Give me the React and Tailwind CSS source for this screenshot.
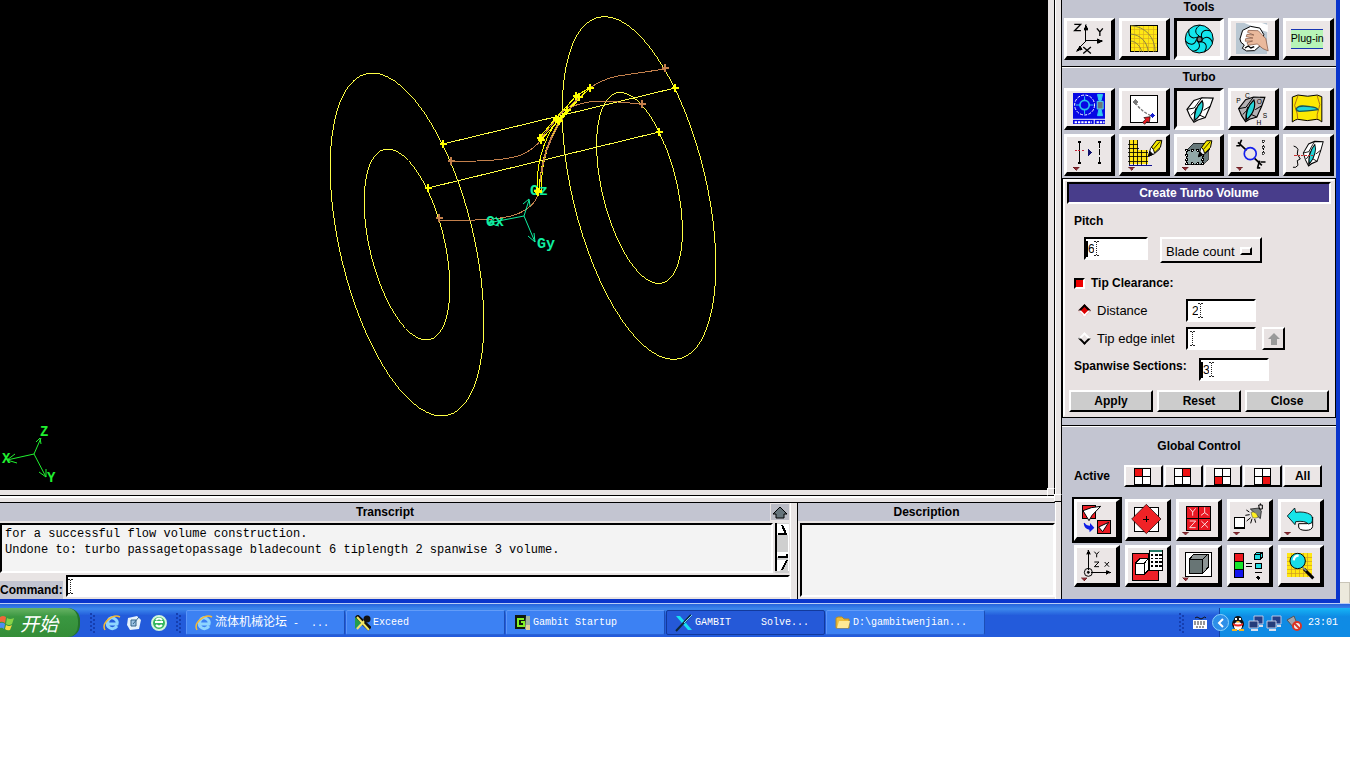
import React from "react";

const RAISED =
  "border-t-[3px] border-l-[3px] border-b-[4px] border-r-[4px] border-t-white border-l-white border-b-black border-r-black";
const PRESSED =
  "border-t-[3px] border-l-[3px] border-b-[4px] border-r-[4px] border-t-black border-l-black border-b-white border-r-white";
const THIN =
  "border-2 border-t-white border-l-white border-b-black border-r-black";
const SUNKEN =
  "border-2 border-t-black border-l-black border-b-white border-r-white";

function IconButton({ label, box, pressed, focused, children }) {
  return (
    <button
      aria-label={label}
      className={
        "flex h-[42px] min-w-0 items-center justify-center overflow-hidden bg-[#ebe6e6] " +
        (pressed ? PRESSED : RAISED) +
        (focused ? " outline-2 outline-black" : "")
      }
    >
      <svg viewBox={box} className="h-[35px] w-full" fill="none" stroke="#000" strokeWidth="3" shapeRendering="crispEdges">
        {children}
      </svg>
    </button>
  );
}

const Drop = ({ x, y }) => <path d={`M${x} ${y}h19l-9 10z`} fill="#8c2f38" stroke="#400" strokeWidth="1" />;

const Blade = ({ dx = 0, dy = 0, gray }) => (
  <g transform={`translate(${dx} ${dy})`} shapeRendering="auto">
    <path d="M408 327l21-27 24-8 34 1-9 25-15 34-22 7-12 7-12-18z" fill={gray ? "#b5b2b5" : "#fff"} strokeWidth="3.5" />
    <path d="M408 327l22-4 16-22 7-9M420 345l12-12 4-12M429 363l3-28M463 352l-18-8M478 318l-20 12" strokeWidth="3" />
    <path d="M432 360c-4-16 3-42 22-59 6 14 1 40-22 59z" fill="#25d5d8" strokeWidth="3.5" />
  </g>
);

const Pencil = ({ x, y }) => (
  <g transform={`translate(${x} ${y})`} shapeRendering="auto">
    <path d="M0 48l6-24 12-14 16 16-16 14z" fill="#fff" strokeWidth="3" />
    <path d="M9 20L24 0h16l-4 20-18 18-3-10z" fill="#f5e800" strokeWidth="3" />
    <path d="M15 26L35 3" strokeWidth="2.5" />
    <path d="M0 48l4-15 9 9z" fill="#000" />
  </g>
);

function ToolsRow() {
  return (
    <div className="grid grid-cols-5 gap-1 px-0.5">
      <IconButton label="Coordinate system" box="51 64 132 105">
        <path d="M108 127V88M108 124h38M108 124l-24 24" />
        <path d="M102 92l6-19 7 19zM142 117l17 7-17 8zM90 138l-12 18 19-6z" fill="#000" strokeWidth="1" />
        <path d="M73 74h19l-18 19h19M141 86l9 11 9-11M150 97v12M100 142l23 20M123 142l-23 20" strokeWidth="4" shapeRendering="auto" />
      </IconButton>
      <IconButton label="Grid size function" box="216 64 132 105">
        <path d="M241 76h82v81h-82z" fill="#ffe715" />
        <path d="M254 78v78M268 78v78M282 78v78M296 78v78M310 78v78M242 89h80M242 103h80M242 117h80M242 131h80M242 144h80" stroke="#d6aa20" strokeWidth="2" />
        <path d="M242 78c45 2 73 35 74 78M242 103c30 2 50 24 53 53M242 124c18 2 30 17 33 32" stroke="#8c8440" shapeRendering="auto" />
      </IconButton>
      <IconButton label="Turbo" box="378 61 132 105" pressed>
        <g shapeRendering="auto">
          <circle cx="445" cy="115" r="42" fill="#13e5ec" />
          {[0, 51.4, 102.8, 154.2, 205.6, 257, 308.4].map((a) => (
            <path key={a} d="M445 106c-15-8-14-23 3-33" transform={`rotate(${a} 445 115)`} />
          ))}
          <circle cx="446" cy="116" r="8" fill="#777" strokeWidth="4" />
        </g>
      </IconButton>
      <IconButton label="Clean geometry" box="546 64 132 105">
        <path d="M561 69h95v95h-95z" fill="#b9c7d2" stroke="none" />
        <g shapeRendering="auto">
          <path d="M585 69h52l20 7v22l-22-8z" fill="#fff" stroke="none" />
          <path d="M573 118l8-26 24-12 28 5 12 20-12 34-16 14-24 1-13-8 6-10-10-8z" fill="#fff" strokeWidth="3" />
          <path d="M598 92l30 1 23 24 7 37-16-7-17-14-27 4-4-8 17-5-22 1 1-8 22-2-20-4 2-7 21 2-19-8z" fill="#eab99c" stroke="#7a4a35" strokeWidth="2" />
          <path d="M588 145l10-6 8 6 10-4" strokeWidth="4" />
        </g>
      </IconButton>
      <IconButton label="Plug-in" box="711 64 132 105">
        <path d="M727 88h96v58h-96z" fill="#b7f5b7" stroke="none" />
        <path d="M727 88h96M727 146h96" stroke="#1734b2" />
        <text x="775" y="128" textAnchor="middle" fontSize="32" fontFamily="Liberation Sans, sans-serif" fill="#000" stroke="none">Plug-in</text>
      </IconButton>
    </div>
  );
}

function TurboRows() {
  return (
    <div className="grid grid-cols-5 gap-1 px-0.5">
      <IconButton label="Turbo profile" box="51 274 132 105">
        <path d="M69 280h98v94H69z" fill="#0707e4" stroke="none" />
        <g shapeRendering="auto">
          <circle cx="104" cy="316" r="30" stroke="#fff" strokeDasharray="9 4" />
          <circle cx="104" cy="316" r="14" stroke="#28c4ed" strokeWidth="5" />
          <path d="M104 290v12M104 330v13M78 316h12M118 316h13M143 284h15l-4 18h-7zM143 348h15l-4-18h-7z" stroke="#31c9ef" fill="#31c9ef" />
          <path d="M142 305h18v23h-18z" fill="#6a7680" stroke="#52d9ee" />
          <path d="M69 359h98M133 359v15" stroke="#fff" />
          <path d="M74 368h52M140 368h24" stroke="#fff" strokeWidth="6" strokeDasharray="7 3" />
        </g>
      </IconButton>
      <IconButton label="Turbo edge" box="216 274 132 105">
        <path d="M241 287h82v81h-82z" fill="#fff" />
        <path d="M257 309q14 24 44 38" stroke="#777" strokeWidth="4" strokeDasharray="9 4" shapeRendering="auto" />
        <path d="M249 307l8-8 8 8-8 8z" fill="#777" stroke="none" />
        <path d="M300 347l8-8 8 8-8 8z" fill="#1821d0" stroke="none" />
        <path d="M301 351l-3 19-5-5-9 9-6-6 9-9-5-5z" fill="#e71920" strokeWidth="2" shapeRendering="auto" />
      </IconButton>
      <IconButton label="Turbo volume" box="378 271 132 105" pressed><Blade dy={-1} /></IconButton>
      <IconButton label="Turbo zones" box="546 274 132 105">
        <Blade dx={161} gray />
        <g fontFamily="Liberation Sans, sans-serif" fontSize="20" fill="#000" stroke="none">
          <text x="588" y="294">C</text><text x="562" y="310">P</text><text x="624" y="313">O</text><text x="642" y="354">S</text><text x="623" y="375">H</text>
        </g>
      </IconButton>
      <IconButton label="Turbo view" box="711 274 132 105">
        <path d="M730 292l17-6q30 7 58 0l14 5v76q-9-8-15-8-29 8-58 0-7 1-16 8z" fill="#fce803" shapeRendering="auto" />
        <path d="M747 288l-10 29 8 26 1 15M805 288l8 27-8 29v15" stroke="#b07112" shapeRendering="auto" />
        <path d="M742 327c7-12 25-9 42-6q21 2 23 9-36 5-55 5-10-1-10-8z" fill="#20d4d8" stroke="#1c5454" strokeWidth="4" shapeRendering="auto" />
      </IconButton>
      <IconButton label="Link edges" box="51 411 132 105">
        <path d="M88 426v65" /><path d="M148 426v65" strokeDasharray="18 4" />
        <path d="M84 426h8M84 490h8M144 426h8M144 490h8" strokeWidth="6" />
        <path d="M75 452h30" stroke="#c32236" strokeDasharray="6 4" />
        <path d="M114 446l14 11-14 12z" fill="#10106c" stroke="none" /><Drop x={69} y={502} />
      </IconButton>
      <IconButton label="Mesh edges" box="216 411 132 105">
        <path d="M237 420h26v31h30v42h-56z" fill="#ffe414" stroke="none" />
        <path d="M240 419v78M250 419v78M262 419v78M274 451v46M290 451v46M234 432h31M234 445h32M234 457h59M234 471h59M234 485h59" strokeWidth="2.5" />
        <path d="M236 498h69" stroke="#101091" /><Pencil x={296} y={421} /><Drop x={235} y={502} />
      </IconButton>
      <IconButton label="Mesh faces" box="381 411 132 105">
        <path d="M411 450l20-20h44v50l-17 14h-47z" fill="#67787a" strokeWidth="2" />
        <path d="M411 450h47v43h-47z" fill="#92a8a8" strokeDasharray="8 5" />
        {[411, 427, 443, 458].map((x) => <path key={x} d={`M${x - 3} 447h6v6h-6zM${x - 3} 489h6v6h-6z`} fill="#fff" />)}
        {[463, 477].map((y) => <path key={y} d={`M408 ${y}h6v6h-6zM455 ${y}h6v6h-6z`} fill="#fff" />)}
        <Pencil x={446} y={422} /><Drop x={396} y={502} />
      </IconButton>
      <IconButton label="Boundary zones" box="546 411 132 105">
        <path d="M567 427l26 24M617 475l22 21M562 437h12M578 419l-6 14M632 482l-6 22M624 504h10M635 486h15" strokeWidth="5" shapeRendering="auto" />
        <circle cx="604" cy="461" r="18" stroke="#1420ed" strokeWidth="5" shapeRendering="auto" />
        <path d="M643 424v38" strokeDasharray="6 4" /><path d="M640 421h6v6h-6zM640 438h6v6h-6zM640 457h6v6h-6z" fill="#fff" strokeWidth="2" /><Drop x={562} y={502} />
      </IconButton>
      <IconButton label="Display view" box="711 411 132 105">
        <path d="M734 438q10 2 13 10l-2 14 9 15-9 5 2 14-7 6h-8" strokeWidth="3" shapeRendering="auto" />
        <g transform="translate(763 424) scale(.76 1) translate(-408 -292)"><Blade /></g>
        <path d="M736 466h55" stroke="#c82d2d" strokeDasharray="7 3" />
      </IconButton>
    </div>
  );
}

function GlobalGrid() {
  return (
    <div className="mt-3 grid grid-cols-5 gap-x-[5px] gap-y-1 pr-3 pl-3">
      <IconButton label="Fit to window" box="81 247 117 105" focused>
        <path d="M98 256h39v39H98z" fill="#ed1d24" />
        <path d="M99 273l25-9 28-4-26 27-9 16z" fill="#fff" shapeRendering="auto" />
        <path d="M142 302h39v38h-39z" fill="#ed1d24" /><path d="M146 322l30-14-18 28z" fill="#fff" shapeRendering="auto" />
        <path d="M104 309q4 9 16 9v-8l13 14-14 14-1-8q-15-2-17-19z" fill="#101ee6" stroke="none" shapeRendering="auto" />
      </IconButton>
      <IconButton label="Pivot" box="237 247 117 105">
        <path d="M256 263h72v72h-72z" fill="#fff" /><path d="M292 254l44 44-44 44-44-44z" fill="#f02226" strokeWidth="2" shapeRendering="auto" />
        <path d="M283 298h18M292 289v18" />
      </IconButton>
      <IconButton label="Orient model" box="390 247 117 105">
        <path d="M413 259h72v73h-72z" fill="#e91823" /><path d="M449 259v73M413 295h72" />
        <path d="M422 266l9 11 9-11M431 277v11M467 263v16M467 279l-11 8M467 279l11 8M422 304h18l-18 20h18M457 304l20 20M477 304l-20 20" stroke="#fff" strokeWidth="2.5" shapeRendering="auto" /><Drop x={400} y={337} />
      </IconButton>
      <IconButton label="Light" box="540 247 117 105">
        <path d="M553 293h31v32h-31z" fill="#fff" strokeWidth="4" />
        <g shapeRendering="auto">
          <path d="M601 268l27-3 6 10-3 22z" fill="#7b8181" strokeWidth="2" /><path d="M603 278q14-6 22 15-12 5-18 0z" fill="#fff020" stroke="#555" strokeWidth="2" />
          <path d="M626 256h11v12h-9zM631 256v-5" strokeWidth="3" />
          <path d="M589 271l9 6M586 287l13-2M590 304l12-10M602 311l4-14M617 309l-3-11" />
        </g>
        <Drop x={550} y={337} />
      </IconButton>
      <IconButton label="Undo" box="693 247 117 105">
        <g shapeRendering="auto"><path d="M746 312h25q16-1 17-20v28q-2 12-20 12-21 0-22-10z" fill="#fff" /><path d="M712 289l22-24 3 13q27-4 45 7 9 9 3 25l-10 3q-9-11-38-7l-2 9z" fill="#16e4e9" strokeWidth="2.5" /></g><Drop x={703} y={337} />
      </IconButton>
      <IconButton label="Orientation axes" box="81 385 117 105">
        <path d="M115 451v-47M122 458h47" /><path d="M109 404l6-14 7 14zM168 452l15 6-15 7z" fill="#000" strokeWidth="1" />
        <circle cx="115" cy="458" r="12" shapeRendering="auto" /><circle cx="115" cy="458" r="3" fill="#000" shapeRendering="auto" />
        <path d="M133 396l7 8 7-8M140 404v9M133 427h14l-14 14h14M164 427l13 14M177 427l-13 14" strokeWidth="3" shapeRendering="auto" /><Drop x={93} y={474} />
      </IconButton>
      <IconButton label="Annotate" box="237 385 117 105">
        <path d="M250 400h48v41h31v40h-79z" fill="#ed2028" /><path d="M260 430l15-15h24v36l-14 14h-25z" fill="#fff" /><path d="M260 430h27v35M287 430l12-15" />
        <path d="M301 391h40v60h-40z" fill="#fff" /><path d="M303 395h36" stroke="#237a66" strokeWidth="6" /><path d="M307 405h8M318 405h8M330 405h8M307 416h8M318 416h8M330 416h8M307 427h8M318 427h8M330 427h8M307 438h8M318 438h8M330 438h8" strokeWidth="5" strokeDasharray="5 2" />
      </IconButton>
      <IconButton label="Shading" box="390 385 117 105">
        <path d="M409 397h78v72h-78z" fill="#fff" /><path d="M420 420l15-17h42v41l-16 17h-41z" fill="#8d9595" /><path d="M420 420h41v41h-41z" fill="#687575" /><path d="M461 420l16-17" /><Drop x={400} y={474} />
      </IconButton>
      <IconButton label="Color mode" box="540 385 117 105">
        <path d="M554 400h27v25h-27z" fill="#ed171d" /><path d="M554 425h27v24h-27z" fill="#17e52b" /><path d="M554 449h27v23h-27z" fill="#1214ed" /><path d="M588 431h17M588 440h17" strokeWidth="4" />
        <path d="M613 404l8-7h16v15l-7 8h-17z" fill="#24dce2" /><path d="M613 404h17v15M630 404l7-7" /><path d="M616 431h18v16h-18z" fill="#24dce2" /><path d="M616 459h19" /><path d="M618 475l7-7 8 7-8 7z" fill="#000" stroke="none" />
      </IconButton>
      <IconButton label="Examine mesh" box="693 385 117 105">
        <path d="M712 400h73v72h-73z" fill="#ffe711" stroke="none" /><path d="M712 412h73M712 424h73M712 436h73M712 448h73M712 460h73M724 400v72M736 400v72M748 400v72M760 400v72M772 400v72" stroke="#cc9827" strokeWidth="2" />
        <g shapeRendering="auto"><path d="M762 448l28 28" strokeWidth="9" /><path d="M755 440l14 14" stroke="#808b91" strokeWidth="5" /><circle cx="743" cy="424" r="23" fill="#19dde8" /><path d="M731 422q2-15 15-14" stroke="#fff" strokeWidth="7" /></g>
      </IconButton>
    </div>
  );
}

const Plus = ({ x, y, c = "#ffff00" }) => <path d={`M${x - 3} ${y}h7M${x} ${y - 4}v8`} stroke={c} strokeWidth="2" />;

function Viewport() {
  return (
    <svg viewBox="0 0 1048 490" className="block h-auto w-full bg-black" fill="none" strokeWidth="1" shapeRendering="crispEdges" role="img" aria-label="Turbo geometry">
      <g stroke="#ffff45">
        <ellipse cx="407" cy="244.500" rx="67" ry="175.500" transform="rotate(-13.4 407 244.5)" />
        <ellipse cx="407" cy="244.500" rx="37.400" ry="97.800" transform="rotate(-13.4 407 244.5)" />
        <ellipse cx="639" cy="188" rx="67" ry="175.500" transform="rotate(-13.4 639 188)" />
        <ellipse cx="639.500" cy="188" rx="37.400" ry="97.800" transform="rotate(-13.4 639.5 188)" />
        <path d="M443 144L675 88M428 188L659 132" />
      </g>
      <g stroke="#ffff00">
        <path d="M539 138L556 118L577 95L590 88M540 141L558 121L577 100L589 89M537 192Q536 150 557 121L567 110M539 192Q541 148 561 120L579 99M541 192Q541 150 562 118L574 103" />
      </g>
      <g stroke="#c4804c">
        <path d="M451 161C480 162 516 160 527 152C538 146 541 139 541 139" />
        <path d="M439 220H475C510 219 520 214 528 208Q537 202 538 192" />
        <path d="M590 88Q600 80 618 76L665 69M567 111Q576 101 606 101L642 104" />
        <path d="M541 138L564 110M540 182Q543 148 560 120M542 172Q545 146 563 118M561 114L582 95" />
      </g>
      <g stroke="#10efa0" shapeRendering="auto">
        <path d="M524 216L488 223M524 216L529 200M524 216L535 242M497 217l-9 6 11 3M523 204l6-5 1 7M528 236l7 6-1-9" />
        <g fill="#10efa0" stroke="none" fontFamily="Liberation Mono, monospace" fontSize="15" fontWeight="bold">
          <text x="486" y="226">Gx</text><text x="530" y="195">Gz</text><text x="537" y="248">Gy</text>
        </g>
      </g>
      <g stroke="#20f030" shapeRendering="auto">
        <path d="M34 454L7 460M34 454L41 438M34 454L46 477M15 454l-8 6 10 3M36 442l4-4 1 6M39 472l7 5v-8" />
        <g fill="#20f030" stroke="none" fontFamily="Liberation Mono, monospace" fontSize="14" fontWeight="bold">
          <text x="2" y="463">X</text><text x="40" y="436">Z</text><text x="47" y="482">Y</text>
        </g>
      </g>
      {[[443, 144], [428, 188], [675, 88], [659, 132], [590, 88], [576, 96], [579, 97], [567, 110], [556, 119], [559, 121], [558, 120], [540, 138], [541, 140], [538, 192], [537, 191]].map(([x, y]) => <Plus key={`${x}-${y}`} x={x} y={y} />)}
      {[[451, 161], [439, 218], [665, 68], [642, 104]].map(([x, y]) => <Plus key={`${x}-${y}`} x={x} y={y} c="#c4804c" />)}
    </svg>
  );
}

const IBeam = () => (
  <svg viewBox="0 0 5 15" className="h-[15px] w-[5px]" stroke="#222" fill="none" shapeRendering="crispEdges" aria-hidden="true">
    <path d="M0 .5h2M3 .5h2M0 14.500h2M3 14.500h2" /><path d="M2.500 1v13" strokeDasharray="1 1" />
  </svg>
);

function Field({ id, value, width, bar }) {
  return (
    <div className={`flex h-[23px] items-center bg-white ${SUNKEN} ${width}`}>
      <span className={bar ? "h-4 w-0.5 bg-black" : value ? "w-1" : "w-0.5"} />
      <input id={id} aria-label={id} defaultValue={value} className={"bg-transparent p-0 text-[12px] leading-4 outline-none " + (value ? "w-[6px]" : "w-0")} />
      <IBeam />
    </div>
  );
}

const ActionButton = ({ children }) => (
  <button className={`h-[22px] bg-[#cccccc] text-[12px] leading-4 font-bold ${THIN}`}>{children}</button>
);

function TurboForm() {
  return (
    <form className="border border-black bg-[#e8e2e2]" onSubmit={(e) => e.preventDefault()}>
      <div className="border-2 border-t-white border-l-white border-r-transparent border-b-transparent pt-px pr-0.5 pb-[3px] pl-0.5">
        <h2 className={`h-[22px] bg-[#483d8b] text-center text-[12px] leading-[18px] font-bold text-white ${SUNKEN}`}>Create Turbo Volume</h2>
        <div className="px-[7px] pt-[9px]">
          <label htmlFor="Pitch" className="block text-[12px] leading-4 font-bold">Pitch</label>
          <div className="mt-2 flex gap-3 pl-2.5">
            <Field id="Pitch" value="6" width="w-16" bar />
            <div className={`relative h-[26px] w-[102px] bg-[#ebe6e6] ${THIN}`}>
              <select aria-label="Pitch type" className="h-full w-full appearance-none bg-transparent pl-1 text-[13px] leading-4 outline-none"><option>Blade count</option></select>
              <span className={`pointer-events-none absolute top-2 right-2 h-2 w-3 bg-[#ebe6e6] ${THIN}`} />
            </div>
          </div>
          <label className="mt-3 flex items-center gap-1.5 text-[12px] leading-4 font-bold">
            <input type="checkbox" defaultChecked className={`size-[11px] appearance-none bg-[#ee0000] ${SUNKEN}`} />Tip Clearance:
          </label>
          <div className="mt-2 flex items-center">
            <label className="flex w-28 items-center gap-2 pl-1.5 text-[13px] leading-4">
              <input type="radio" name="tip" defaultChecked className="size-[9px] rotate-45 appearance-none border-2 border-t-black border-l-black border-r-white border-b-white bg-[#dd0000]" /><span>Distance</span>
            </label>
            <Field id="Distance" value="2" width="w-[70px]" />
          </div>
          <div className="mt-[5px] flex items-center">
            <label className="flex w-28 items-center gap-2 pl-1.5 text-[13px] leading-4 whitespace-nowrap">
              <input type="radio" name="tip" className="size-[9px] rotate-45 appearance-none border-2 border-t-white border-l-white border-r-black border-b-black" /><span>Tip edge inlet</span>
            </label>
            <Field id="Tip edge inlet" value="" width="w-[70px]" />
            <button aria-label="Pick edge" className={`ml-1.5 flex h-[23px] w-[23px] items-center justify-center ${THIN}`}>
              <svg viewBox="0 0 12 12" className="size-3" fill="#999"><path d="M6 0l6 6H9v6H3V6H0z" /></svg>
            </button>
          </div>
          <div className="mt-2 flex gap-2">
            <label htmlFor="Spanwise Sections" className="w-[117px] text-[12px] leading-4 font-bold whitespace-nowrap">Spanwise Sections:</label>
            <Field id="Spanwise Sections" value="3" width="w-[70px]" bar />
          </div>
        </div>
        <div className="mt-[9px] grid grid-cols-3 gap-1 px-0.5">
          <ActionButton>Apply</ActionButton><ActionButton>Reset</ActionButton><ActionButton>Close</ActionButton>
        </div>
      </div>
    </form>
  );
}

function Quadrant({ cx, cy, label }) {
  return (
    <button aria-label={label} className={`flex h-[22px] items-center justify-center bg-[#ebe6e6] ${THIN}`}>
      <svg viewBox="0 0 18 17" className="h-[17px] w-[18px]" shapeRendering="crispEdges">
        <path d="M1 1h16v15H1z" fill="#fff" /><rect x={cx} y={cy} width="8" height="8" fill="#ee1414" />
        <path d="M.5.5h16v16H.5zM8.500 0v17M0 8.500h17" fill="none" stroke="#000" />
      </svg>
    </button>
  );
}

function ControlPanel() {
  return (
    <aside className="w-[275px] shrink-0 border-l border-black bg-[#c3c5d1]">
      <h2 className="h-[18px] text-center text-[12px] leading-[14px] font-bold">Tools</h2>
      <ToolsRow />
      <h2 className="mt-[6px] h-[22px] border-t border-black text-center text-[12px] leading-5 font-bold shadow-[inset_0_1px_0_#fff]">Turbo</h2>
      <TurboRows />
      <div className="mt-0.5"><TurboForm /></div>
      <section className="mt-[7px] border-t border-black pb-3 shadow-[inset_0_1px_0_#fff]">
        <h2 className="pt-3 text-center text-[12px] leading-4 font-bold">Global Control</h2>
        <div className="mt-[11px] flex items-center pr-3.5 pl-3">
          <span className="w-[50px] text-[12px] leading-4 font-bold">Active</span>
          <div className="grid flex-1 grid-cols-5 gap-px">
            <Quadrant label="Upper left" cx={1} cy={1} /><Quadrant label="Upper right" cx={9} cy={1} /><Quadrant label="Lower left" cx={1} cy={9} /><Quadrant label="Lower right" cx={9} cy={9} />
            <button className={`bg-[#ebe6e6] text-[12px] leading-4 font-bold ${THIN}`}>All</button>
          </div>
        </div>
        <GlobalGrid />
      </section>
    </aside>
  );
}

function ScrollStrip() {
  return (
    <svg viewBox="0 0 15 50" className="h-[50px] w-[15px]" shapeRendering="crispEdges" aria-hidden="true">
      <path d="M0 0h14v50H0z" fill="#cfcfcf" /><path d="M0 0h2v48H0z" />
      <path d="M2 1h11v11H2zM2 29h11v5H2zM2 37h9l-6 11H2z" fill="#fff" /><path d="M7 2l4 9H3M12 31v3H3M12 37L7 47" fill="none" stroke="#000" strokeWidth="2" /><path d="M13 1v47" stroke="#fff" />
    </svg>
  );
}

function Console() {
  return (
    <div className="flex bg-[#e8e4e4]">
      <section className="min-w-0 flex-1">
        <div className="flex h-[18px] items-center bg-[#c3c5d1]">
          <h2 className="flex-1 text-center text-[12px] leading-4 font-bold">Transcript</h2>
          <button aria-label="Expand transcript" className="flex h-full w-5 items-center justify-center border border-[#e8e4e4] bg-[#bbbcc5]">
            <svg viewBox="0 0 16 13" className="h-[13px] w-4"><path d="M8 1l7 7h-3v4H4V8H1z" fill="#66747a" stroke="#000" /></svg>
          </button>
        </div>
        <div className="mt-0.5 flex h-[50px] gap-0.5">
          <div className={`flex-1 bg-[#f3f3f3] pt-px pl-[3px] font-[Liberation_Mono,monospace] text-[12px] leading-4 whitespace-nowrap ${SUNKEN}`}>
            <p>for a successful flow volume construction.</p>
            <p>Undone to: turbo passagetopassage bladecount 6 tiplength 2 spanwise 3 volume.</p>
          </div>
          <ScrollStrip />
        </div>
        <div className="flex items-end gap-[3px] pt-0.5">
          <label htmlFor="command" className="bg-[#c3c5d1] text-[12px] leading-[18px] font-bold">Command:</label>
          <div className={`mb-0.5 flex h-[22px] flex-1 items-center bg-white ${SUNKEN}`}>
            <IBeam /><input id="command" className="min-w-0 flex-1 bg-transparent font-[Liberation_Mono,monospace] text-[12px] outline-none" />
          </div>
        </div>
      </section>
      <div className="w-2 border-r border-l border-l-white border-r-black" />
      <section className="flex w-[257px] flex-col">
        <h2 className="bg-[#c3c5d1] text-center text-[12px] leading-[18px] font-bold">Description</h2>
        <div className={`mt-0.5 mb-0.5 ml-0.5 flex-1 bg-[#f3f3f3] ${SUNKEN}`} />
      </section>
    </div>
  );
}

const IE = () => (
  <svg viewBox="0 0 18 18" className="size-[18px] shrink-0" fill="none">
    <path d="M14 12Q11 16 7 14T5 7t7-2q3 2 2 5H5" stroke="#8ed5ff" strokeWidth="3" /><path d="M2 16C-2 9 10-1 17 3" stroke="#f4b936" strokeWidth="1.500" />
  </svg>
);
const ExceedIcon = () => (
  <svg viewBox="0 0 16 16" className="size-4 shrink-0"><path d="M1 1l14 13" stroke="#111" strokeWidth="5" /><path d="M0 2l6 6-6 6z" fill="#229e4b" /><path d="M2 2l12 13M2 14L12 3" stroke="#f2e766" strokeWidth="2" /><circle cx="12" cy="4" r="3.500" fill="#111" /></svg>
);
const GambitIcon = () => (
  <svg viewBox="0 0 16 16" className="size-4 shrink-0"><path d="M0 0h11v14H0z" fill="#101910" /><path d="M9 4H3v7h6V7H6" fill="none" stroke="#83f225" strokeWidth="2" /><path d="M11 1h4v13h-5z" fill="#9fb3a0" /><path d="M11 10h4v5h-4z" fill="#e1cf9c" /></svg>
);
const XIcon = () => (
  <svg viewBox="0 0 18 18" className="size-[18px] shrink-0"><path d="M1 2h4l12 14h-4z" fill="#18e2f2" /><path d="M16 1L1 17" stroke="#0c273c" strokeWidth="2" /><path d="M17 1L9 9" stroke="#7ddce9" /></svg>
);
const FolderIcon = () => (
  <svg viewBox="0 0 16 14" className="h-3.5 w-4 shrink-0"><path d="M1 12V2l2-1h4l2 2h5v9z" fill="#eebd3a" stroke="#b78b22" /><path d="M2 12l2-7h11l-2 7z" fill="#ffe995" /></svg>
);

const Grip = () => (
  <svg viewBox="0 0 6 22" className="h-[22px] w-1.5 shrink-0" aria-hidden="true">
    {[1, 5, 9, 13, 17].map((y) => <path key={y} d={`M0 ${y}h2v2H0zM3 ${y + 2}h2v2H3z`} fill="#153eaf" />)}
  </svg>
);

function Task({ icon, active, children }) {
  return (
    <button className={"flex h-[25px] w-[159px] items-center gap-0.5 overflow-hidden rounded-[2px] border pl-2 font-[Liberation_Mono,Noto_Sans_CJK_SC,monospace] text-[10px] whitespace-pre text-white " + (active ? "border-[#123a9c] bg-[#2559d8]" : "border-t-[#639cf8] border-l-[#5a95f8] border-r-[#1d4eb5] border-b-[#2a63d5] bg-[#3c81f3]")}>
      {icon}<span>{children}</span>
    </button>
  );
}

const Monitor = () => (
  <svg viewBox="0 0 16 16" className="size-4"><path d="M6 1h9v8H6z" fill="#243f87" stroke="#b7c6e6" /><path d="M1 6h9v7H1z" fill="#253d7b" stroke="#c1cae3" /><path d="M3 15h7M11 11h4" stroke="#d9dfed" strokeWidth="2" /></svg>
);

function Taskbar() {
  return (
    <footer className="flex h-[34px] items-end border-t border-[#b9cdf6] bg-linear-to-b from-[#2663dc] via-[#3d87ec] via-15% to-[#235bdb] to-35%">
      <button className="flex h-[29px] w-20 items-center gap-1.5 rounded-r-xl border-r-2 border-[#23722c] bg-linear-to-b from-[#67b365] via-[#3a9741] via-30% to-[#348d37] text-[19px] leading-6 text-white italic">
        <svg viewBox="0 0 14 16" className="h-4 w-3.5 shrink-0"><path d="M0 2q3-2 6 0l-1 6q-3-2-5-1z" fill="#f1673a" /><path d="M7 3q3 2 7 0l-2 6q-3 2-6 0z" fill="#88d348" /><path d="M0 8q3-1 5 1l-1 5q-2-2-4-1z" fill="#4e8df1" /><path d="M6 10q3 2 6 0l-2 5q-3 1-5-1z" fill="#f9d943" /></svg>
        <span className="font-['Noto_Sans_CJK_SC',sans-serif]">开始</span>
      </button>
      <div className="flex h-[29px] w-[106px] items-center gap-[5px] pl-2.5">
        <Grip /><span className="ml-0.5"><IE /></span>
        <svg viewBox="0 0 16 16" className="size-4"><path d="M2 3l9-2 4 4-2 9-9 1-3-5z" fill="#e5f2fb" /><path d="M5 5h5v6H5zM7 9l6-7" fill="#9dc4e5" stroke="#346587" /></svg>
        <svg viewBox="0 0 16 16" className="ml-1 size-4"><circle cx="8" cy="8" r="7" fill="#33b75e" stroke="#d2f6db" strokeWidth="2" /><path d="M4 7h8M5 10q3 3 6 0M5 5q3-3 6 0" stroke="#fff" strokeWidth="2" fill="none" /></svg>
        <span className="ml-1"><Grip /></span>
      </div>
      <nav className="flex h-[27px] min-w-0 flex-1 items-start gap-px">
        <Task icon={<IE />}><span className="text-[12px]">流体机械论坛</span> -  ...</Task>
        <Task icon={<ExceedIcon />}>Exceed</Task>
        <Task icon={<GambitIcon />}>Gambit Startup</Task>
        <Task icon={<XIcon />} active>GAMBIT     Solve...</Task>
        <Task icon={<FolderIcon />}>D:\gambitwenjian...</Task>
      </nav>
      <div className="flex h-[29px] items-center gap-2 pr-3">
        <Grip />
        <svg viewBox="0 0 14 13" className="h-[13px] w-3.5"><path d="M0 4h14v9H0z" fill="#fff" /><path d="M1 6h12M1 8h12M3 11h8" stroke="#333" strokeDasharray="2 1" /><path d="M2 2q2-2 4 0t4 0 3 0" stroke="#111" fill="none" /></svg>
      </div>
      <div className="flex h-[29px] w-[131px] items-center border-l border-[#1042a8] bg-linear-to-b from-[#18b5f5] to-[#0f8be4] to-30%">
        <button aria-label="Show hidden icons" className="-ml-2 flex size-[17px] items-center justify-center rounded-full border border-[#8cd4fc] bg-[#2d8fe8]">
          <svg viewBox="0 0 8 10" className="h-2.5 w-2" fill="none" stroke="#fff" strokeWidth="2"><path d="M6 1L2 5l4 4" /></svg>
        </button>
        <div className="ml-px flex gap-0.5">
          <svg viewBox="0 0 16 16" className="size-4"><ellipse cx="8" cy="9" rx="6" ry="6" fill="#111" /><circle cx="8" cy="5" r="4" fill="#111" /><ellipse cx="8" cy="11" rx="4" ry="4" fill="#fff" /><path d="M3 8q5 3 10 0v2q-5 3-10 0z" fill="#ed2922" /><path d="M6 6h4l-2 2zM2 14h5v2H2zM9 14h5v2H9z" fill="#f7b51c" /><path d="M6 3v2M10 3v2" stroke="#fff" strokeWidth="2" /></svg>
          <Monitor /><Monitor />
          <svg viewBox="0 0 16 16" className="ml-0.5 size-4"><path d="M1 5l7-4 4 10-4 2z" fill="#a1a4ac" stroke="#555" /><circle cx="11" cy="11" r="4" fill="#eee" stroke="#d93526" strokeWidth="2" /><path d="M8 8l6 6" stroke="#d93526" strokeWidth="2" /></svg>
        </div>
        <time className="ml-1.5 font-[Liberation_Mono,monospace] text-[10px] text-white">23:01</time>
      </div>
    </footer>
  );
}

export default function App() {
  return (
    <div className="min-h-screen bg-white pr-4 font-['Liberation_Sans',sans-serif] text-black">
      <div className="flex items-end">
        <main className="flex min-w-0 flex-1 border-r-4 border-b-4 border-[#0a35cb]">
          <div className="min-w-0 flex-1">
            <div className="relative border-r border-b border-black bg-[#e8e4e4] pr-1.5 pb-[5px]">
              <Viewport />
              <span className="absolute -right-px -bottom-px size-2 border border-t-white border-l-white border-r-black border-b-black bg-[#e8e4e4]" />
            </div>
            <div className="relative h-[7px] border-t-2 border-b border-t-white border-b-black bg-[#e8e4e4]">
              <span className="absolute -top-1 -right-[7px] z-10 size-2 border border-t-white border-l-white border-r-black border-b-black bg-[#e8e4e4]" />
            </div>
            <Console />
          </div>
          <div className="w-1.5 border-l border-white bg-[#e8e4e4]" />
          <ControlPanel />
        </main>
        <div className="h-[21px] w-2.5 border-t border-r border-[#c9c5b8] bg-[#ece9dc]" />
      </div>
      <Taskbar />
    </div>
  );
}
